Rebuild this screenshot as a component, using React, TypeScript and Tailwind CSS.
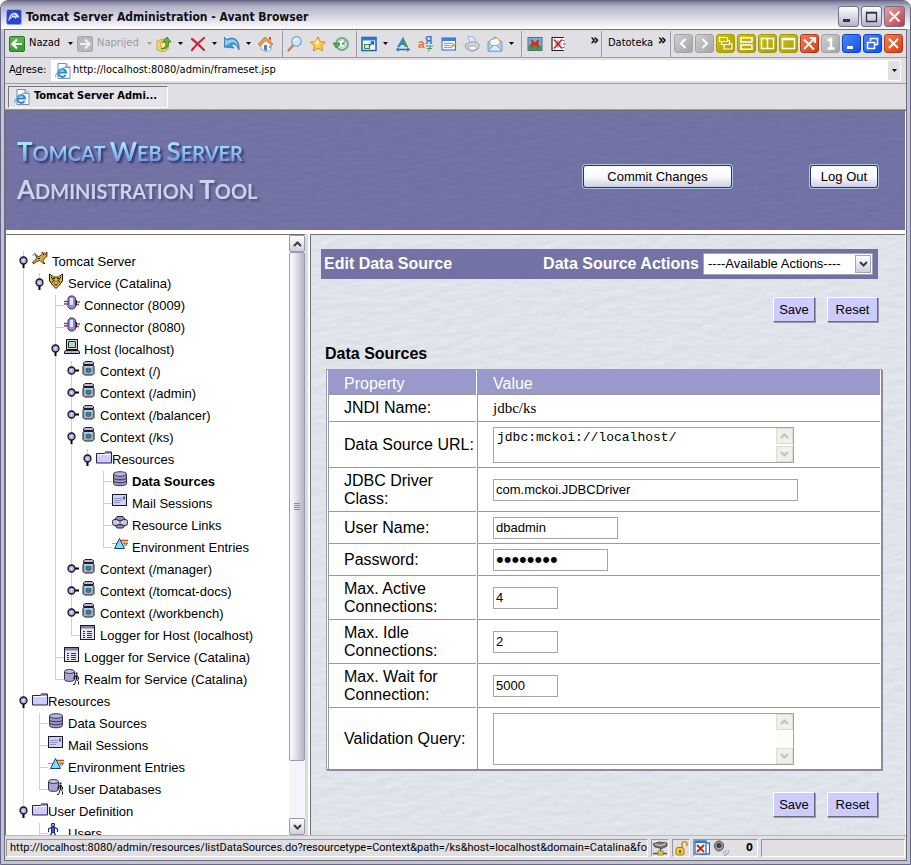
import type { ReactNode } from "react";

const TAHOMA = "font-['DejaVu_Sans_Condensed','DejaVu_Sans',sans-serif]";

/* ---------- small drawings ---------- */

function Icon({ children, size = 16 }: { children: ReactNode; size?: number }) {
  return (
    <svg width={size} height={size} viewBox="0 0 16 16" className="block shrink-0" aria-hidden="true">
      {children}
    </svg>
  );
}

function Caret({ color = "#000" }: { color?: string }) {
  return (
    <svg width="5" height="3" viewBox="0 0 5 3" className="block shrink-0" aria-hidden="true">
      <path d="M0 0h5L2.5 3z" fill={color} />
    </svg>
  );
}

const BackIcon = () => (
  <Icon>
    <rect x=".5" y=".5" width="15" height="15" rx="1.5" fill="#3f9e3a" stroke="#2b7a2b" />
    <path d="M1 1h14v6L1 12z" fill="#74bd62" opacity=".5" />
    <path d="M13 8H4M8 3.5L3.5 8 8 12.500" fill="none" stroke="#fff" strokeWidth="2.200" />
  </Icon>
);
const ForwardIcon = () => (
  <Icon>
    <rect x=".5" y=".5" width="15" height="15" rx="1.500" fill="#b9b9b9" stroke="#a9a9a9" />
    <path d="M3 8h9M8 3.500L12.500 8 8 12.500" fill="none" stroke="#f1f1f1" strokeWidth="2.200" />
  </Icon>
);
const OpenIcon = () => (
  <Icon>
    <path d="M1 5l6-2 5 1v9l-5 3-6-2z" fill="#f3d36c" stroke="#c29a2e" strokeWidth=".8" />
    <path d="M4 7l8-2v8l-5 3z" fill="#fbe79a" stroke="#c29a2e" strokeWidth=".8" />
    <path d="M5 12.500c5 0 5-3 4.500-6.500H6.500L11 1l4 5h-2.500c.5 5-2 8-7.500 6.500z" fill="#5fb83a" stroke="#2f7d1c" strokeWidth=".8" />
  </Icon>
);
const StopIcon = () => (
  <Icon>
    <path d="M2 3c4 3 8 7 12 11M14 2C9 6 5 10 2 14" stroke="#c8283c" strokeWidth="2.200" strokeLinecap="round" fill="none" />
  </Icon>
);
const UndoIcon = () => (
  <Icon>
    <path d="M0 11V1l3 2.500C9 0 16 3 15 14c-2-5-5-7-8-5l3 3z" fill="#4f9bd2" stroke="#2f6fa6" strokeWidth=".8" />
    <path d="M1 3l2 2c5-3 10-1 11 5-3-5-7-5-10-2L1.500 10z" fill="#b7dcf2" opacity=".8" />
  </Icon>
);
const HomeIcon = () => (
  <Icon>
    <path d="M3 8l5-5 5 5v6l-4 2-6-3z" fill="#f1f4fa" stroke="#8a96ae" strokeWidth=".8" />
    <path d="M0 8l7-7 8 7-1.500 1.500L8 4.500 2 10z" fill="#f29a4e" stroke="#bf6520" strokeWidth=".7" />
    <path d="M11 1h2v4l-2-2z" fill="#c9502a" />
    <path d="M6 9h3v6l-3-1z" fill="#4b84cc" />
    <path d="M11 10h2v2h-2z" fill="#6fa3dd" />
  </Icon>
);
const SearchIcon = () => (
  <Icon>
    <circle cx="9.500" cy="5.500" r="4.800" fill="#cfe6f7" stroke="#7fa3c6" strokeWidth="1.300" />
    <path d="M7 4.500c1-2 3-2 4-1.500" stroke="#fff" strokeWidth="1.200" fill="none" />
    <path d="M6 9.500L1.500 14.500" stroke="#c07f4a" strokeWidth="2.200" strokeLinecap="round" />
  </Icon>
);
const StarIcon = () => (
  <Icon>
    <path d="M8 .8l2.200 4.900 5.300.5-4 3.500 1.300 5.300L8 12.200 3.200 15l1.300-5.300-4-3.500 5.300-.5z" fill="#fbd14b" stroke="#d58a1e" />
    <path d="M8 3l1.300 3.500L8 9 4 7z" fill="#fff0a8" />
  </Icon>
);
const HistoryIcon = () => (
  <Icon>
    <circle cx="9" cy="8" r="6" fill="#dfeeed" stroke="#6fae7c" strokeWidth="1.800" />
    <circle cx="9.500" cy="7.500" r="3.800" fill="#f2f9fb" stroke="#8fb5b2" strokeWidth=".7" />
    <path d="M9 8l3.500-3M9 8h3" stroke="#3c6f67" strokeWidth="1" />
    <path d="M0 7h6.500v2L3 12z" fill="#4db04a" stroke="#27752b" strokeWidth=".6" />
  </Icon>
);
const WindowIcon = () => (
  <Icon>
    <rect x="1" y="1.500" width="14" height="13" fill="#fff" stroke="#1d5fb8" strokeWidth="1.500" />
    <path d="M1 1.500h14v3H1z" fill="#2a78d8" />
    <path d="M3.500 8.500h5v4h-5z" fill="#d7ecd2" stroke="#3d8c3a" strokeWidth="1.200" />
    <path d="M8.500 9.500l4-3.500M9.500 6h3v3" stroke="#1d5fb8" strokeWidth="1.300" fill="none" />
  </Icon>
);
const FontIcon = () => (
  <Icon>
    <path d="M8 1l5 10h-3L9 9H6l-1 2H2z" fill="#3c83d0" />
    <path d="M8 1l5 10h-3L7 4.500z" fill="#36a05a" />
    <path d="M2 13.500h12" stroke="#2c65ac" strokeWidth="1.300" />
    <path d="M4 11l-3.500 2.500L4 16zM12 11l3.500 2.500L12 16z" fill="#3c83d0" />
  </Icon>
);
const TranslateIcon = () => (
  <Icon>
    <text x="0" y="12" fontSize="12" fontWeight="700" fill="#f0703c" fontFamily="Liberation Sans">a</text>
    <text x="7" y="8" fontSize="10" fontWeight="700" fill="#2f77d0" fontFamily="Liberation Sans">Я</text>
    <path d="M8 10h7M9 12.500h5M12.500 10l-2 5.500" stroke="#3f9e52" fill="none" />
  </Icon>
);
const FormIcon = () => (
  <Icon>
    <rect x="1" y="2" width="13.500" height="12" fill="#f4f8fd" stroke="#2a6dc2" />
    <path d="M1 2h13.500v3H1z" fill="#3c82dc" />
    <path d="M3 7.500h9M3 9.500h6M3 11.500h7" stroke="#7ba5d8" />
    <path d="M15 7.500l-5 3.500" stroke="#e0913b" strokeWidth="2" />
  </Icon>
);
const PrinterIcon = () => (
  <Icon>
    <path d="M4 0l6 1 2 6H6z" fill="#dceafb" stroke="#8aa7cf" strokeWidth=".8" />
    <path d="M1 9l5-3h6l3.500 3-1.500 4-6 2.500-6-3z" fill="#d3d4d8" stroke="#8d8f96" strokeWidth=".8" />
    <path d="M4 10.500l7-.5 2 3-6 1.500z" fill="#f8f8f8" stroke="#8d8f96" strokeWidth=".6" />
  </Icon>
);
const MailIcon = () => (
  <Icon>
    <path d="M1 6l7-5 7 5v9H1z" fill="#a8cdf0" stroke="#5a8fc6" strokeWidth=".8" />
    <path d="M3 4l8-2 2 5-5 4-5-3z" fill="#fff" stroke="#d99b52" strokeWidth=".8" />
    <path d="M1 15l6-6 1 1 1-1 6 6z" fill="#dceefb" stroke="#5a8fc6" strokeWidth=".7" />
  </Icon>
);
const PictureOffIcon = () => (
  <Icon>
    <rect x="1" y="1.500" width="14" height="13" fill="#6fb3ea" stroke="#5c6b7d" />
    <path d="M1.500 9l4-2 9 3v4h-13z" fill="#3f9a44" />
    <path d="M4 4l8 7M12 4l-8 7M4 7.500h8" stroke="#d92b22" strokeWidth="2" />
  </Icon>
);
const FlashOffIcon = () => (
  <Icon>
    <path d="M14 1.500H2v13h12" fill="#fff" stroke="#222" strokeWidth="1.200" />
    <path d="M12.500 4l2 1M13 8h2.500M12.500 12l2-1" stroke="#555" />
    <path d="M4 3.500l8 9M12 3.500l-8 9" stroke="#c92a2a" strokeWidth="1.800" />
    <path d="M8 4v8M4.500 8h7" stroke="#8d2020" strokeWidth=".6" />
  </Icon>
);
const PageIcon = () => (
  <Icon>
    <path d="M3 .5h8l4 4v11H3z" fill="#fff" stroke="#6c7f9c" strokeWidth=".9" />
    <path d="M11 .5v4h4" fill="#dce6f4" stroke="#6c7f9c" strokeWidth=".9" />
    <path d="M11 9.500H3.500a3.800 3.800 0 0 1 7.500 0zM10.500 12A3.800 3.800 0 0 1 3.500 9.500" fill="none" stroke="#2a86d8" strokeWidth="2" />
    <path d="M1 14c-2-3 8-11 12-10" fill="none" stroke="#5cb2ee" strokeWidth="1.100" />
  </Icon>
);
const AppIcon = () => (
  <Icon>
    <rect x=".5" y=".5" width="15" height="15" rx="2" fill="#2b45c8" stroke="#8fa2ee" />
    <path d="M2.500 12.500C3 2 12 1 13.500 9.500 12 7.500 10.500 8 9.500 10 8.500 7 5 8 2.500 12.500z" fill="#e8eeff" />
    <path d="M5 8.500c1-3 4-3.500 5-1" stroke="#2b45c8" fill="none" />
  </Icon>
);

/* ---------- tree drawings ---------- */

const CatIcon = () => (
  <Icon>
    <path d="M1 4.500c1-2.500 3-2 4 0" fill="none" stroke="#33260c" />
    <path d="M3 4.500l4 1 3-2V1l1.500 1h2L15 1v4.500l-2.500 2-1.500 2.500 2 2.500h-2l-3-3-3 1-3.500 2.500L.500 11l3-2 1.500-3z" fill="#d6a83c" stroke="#33260c" strokeWidth=".8" />
    <path d="M11 3h1v1h-1zM13.500 3h1v1h-1zM6 7h2v1H6z" fill="#111" />
  </Icon>
);
const CatFaceIcon = () => (
  <Icon>
    <path d="M1.500 1l4 3h5l4-3v7l-3 4-3.500 3.500L4.500 12l-3-4z" fill="#e0b440" stroke="#2b1f08" />
    <path d="M3 4l3 4M13 4l-3 4M3.500 9h2M10.500 9h2M5 5.500h2M9 5.500h2" stroke="#2b1f08" />
    <path d="M6.500 7.500L8 9l1.500-1.500v4L8 13l-1.500-1.500z" fill="#fff0bd" stroke="#7b4a12" strokeWidth=".7" />
    <path d="M7 10.500h2v1.500H7z" fill="#7b2a12" />
  </Icon>
);
const ConnectorIcon = () => (
  <Icon>
    <path d="M0 6.500h4M0 9h4" stroke="#a0308e" strokeWidth="1.300" />
    <path d="M12 7h4M12 9.500h3" stroke="#b0492c" strokeWidth="1.300" />
    <path d="M6 1h3.500l2 2v9l-2 2H6l-2-2V3z" fill="#8e89c8" stroke="#3d3976" />
    <path d="M6 3h3v7H6z" fill="#e6e5f8" />
    <path d="M12.500 5v5.500" stroke="#222" />
  </Icon>
);
const HostIcon = () => (
  <Icon>
    <path d="M2.500.5h11v10h-11z" fill="#d4d4e2" stroke="#111" />
    <path d="M4.500 2.500h7v6h-7z" fill="#b3d6c6" stroke="#333" />
    <path d="M.5 14.500v-1.500l1-1.500h13l1 1.500v1.500z" fill="#c3c0dd" stroke="#111" />
    <path d="M3 13h9" stroke="#777" strokeDasharray="1 1" />
  </Icon>
);
const ContextIcon = () => (
  <Icon>
    <path d="M3.500 2l1.500-1.500h7L13.500 2v1.500h-10z" fill="#b9b9d0" stroke="#1c1c33" />
    <path d="M3.500 4.500h10l.5 1v7l-1.500 1.500h-8L3 12.500v-7z" fill="#a9aabf" stroke="#1c1c33" />
    <circle cx="8.500" cy="9" r="2.500" fill="#2c8595" stroke="#155" strokeWidth=".6" />
    <path d="M5 6h7" stroke="#e4e4f0" />
  </Icon>
);
const FolderIcon = () => (
  <Icon>
    <path d="M.5 4.500h8l1-1.500h6v11H.5z" fill="#ccccff" stroke="#222244" />
    <path d="M9 2.500h6v2H9z" fill="#666699" />
    <path d="M1.500 5.500h13" stroke="#fff" />
  </Icon>
);
const DatabaseIcon = () => (
  <Icon>
    <path d="M1.500 3.500v9c0 3 13 3 13 0v-9" fill="#9a99c4" stroke="#333355" />
    <ellipse cx="8" cy="3" rx="6.500" ry="2.300" fill="#b8b8da" stroke="#333355" />
    <path d="M1.500 6.500c0 3 13 3 13 0M1.500 9.500c0 3 13 3 13 0" fill="none" stroke="#333355" />
  </Icon>
);
const SessionIcon = () => (
  <Icon>
    <rect x=".5" y="1.500" width="14" height="11" fill="#ccd2f4" stroke="#16162c" />
    <path d="M2.500 5.500h7M2.500 7.500h7M2.500 9.500h6" stroke="#555a88" strokeDasharray="1 1" />
    <path d="M11 3.500h2v3h-2z" fill="#4a58b8" />
  </Icon>
);
const LinkIcon = () => (
  <Icon>
    <path d="M3 4l2-2.500h6L13 4v2H3z" fill="#8f8dbd" stroke="#24243c" />
    <path d="M3 10h10l-2 3H5z" fill="#9b99c6" stroke="#24243c" />
    <rect x=".5" y="4.500" width="6" height="6" rx="2" fill="#c2c1e2" stroke="#24243c" />
    <rect x="9.500" y="4.500" width="6" height="6" rx="2" fill="#c2c1e2" stroke="#24243c" />
    <path d="M5 7.500h6" stroke="#fff" strokeWidth="2" />
    <path d="M8 5v5" stroke="#24243c" />
  </Icon>
);
const PrismIcon = () => (
  <Icon>
    <path d="M0 6.500h5" stroke="#5fb4d8" />
    <path d="M9 3.500h7" stroke="#e03c2c" strokeWidth="1.500" />
    <path d="M10 5h6" stroke="#f2c328" strokeWidth="1.500" />
    <path d="M11 6.500h5" stroke="#45a845" strokeWidth="1.500" />
    <path d="M12 8h3" stroke="#5650c8" />
    <path d="M7.500 1.500l5 10h-10z" fill="#7fdcf0" stroke="#123c8c" />
  </Icon>
);
const LoggerIcon = () => (
  <Icon>
    <rect x=".5" y=".5" width="14" height="14" fill="#e6e6f2" stroke="#1a1a2c" />
    <path d="M1 1h13v2.500H1z" fill="#7f7fa8" />
    <path d="M3 6.500h2M3 8.500h2M3 10.500h2M3 12.500h2M7 6.500h5M7 8.500h5M7 10.500h5M7 12.500h5" stroke="#333350" />
  </Icon>
);
const RealmIcon = () => (
  <Icon>
    <path d="M.5 2.500v8c0 2.500 10 2.500 10 0v-8" fill="#a7a5d2" stroke="#333355" />
    <ellipse cx="5.500" cy="2.500" rx="5" ry="2" fill="#c4c3e4" stroke="#333355" />
    <path d="M11.500 3.500h2v2h-2z" fill="#16161f" />
    <path d="M12.500 6v4.500M12.500 10l-2 5.500H9M12.500 10l2 2.500v3M12.500 6.500L10 8v2.500M12.500 6.500l2 1.500v2.500" stroke="#16161f" fill="none" />
    <path d="M11.500 6h2v4h-2z" fill="#16161f" />
  </Icon>
);
const UserIcon = () => (
  <Icon>
    <path d="M3.500.5h3v3h-3z" fill="#8fa6ee" stroke="#1b2f7a" />
    <path d="M3.500 4.500h3v5h-3z" fill="#3d5fc4" stroke="#1b2f7a" />
    <path d="M3 4.500L.5 6v3M7 4.500L9.500 6v3M4 9.500L2.500 12v3H1M6 9.500L7.500 12v3H9" stroke="#1b2f7a" fill="none" strokeWidth="1.300" />
  </Icon>
);

/* ---------- tree ---------- */

type Handle = "open" | "closed" | "branch" | "last";
type Node = {
  label: string;
  icon: () => ReactNode;
  /* one character per guide column: "|" draws a line, "." leaves it blank */
  guides: string;
  handle: Handle;
  ends?: boolean;
  tight?: boolean;
  current?: boolean;
};

const NODES: Node[] = [
  { label: "Tomcat Server", icon: CatIcon, guides: "", handle: "open" },
  { label: "Service (Catalina)", icon: CatFaceIcon, guides: "|", handle: "open", ends: true },
  { label: "Connector (8009)", icon: ConnectorIcon, guides: "|.", handle: "branch" },
  { label: "Connector (8080)", icon: ConnectorIcon, guides: "|.", handle: "branch" },
  { label: "Host (localhost)", icon: HostIcon, guides: "|.", handle: "open" },
  { label: "Context (/)", icon: ContextIcon, guides: "|.|", handle: "closed" },
  { label: "Context (/admin)", icon: ContextIcon, guides: "|.|", handle: "closed" },
  { label: "Context (/balancer)", icon: ContextIcon, guides: "|.|", handle: "closed" },
  { label: "Context (/ks)", icon: ContextIcon, guides: "|.|", handle: "open" },
  { label: "Resources", icon: FolderIcon, guides: "|.||", handle: "open", ends: true, tight: true },
  { label: "Data Sources", icon: DatabaseIcon, guides: "|.||.", handle: "branch", current: true },
  { label: "Mail Sessions", icon: SessionIcon, guides: "|.||.", handle: "branch" },
  { label: "Resource Links", icon: LinkIcon, guides: "|.||.", handle: "branch" },
  { label: "Environment Entries", icon: PrismIcon, guides: "|.||.", handle: "last" },
  { label: "Context (/manager)", icon: ContextIcon, guides: "|.|", handle: "closed" },
  { label: "Context (/tomcat-docs)", icon: ContextIcon, guides: "|.|", handle: "closed" },
  { label: "Context (/workbench)", icon: ContextIcon, guides: "|.|", handle: "closed" },
  { label: "Logger for Host (localhost)", icon: LoggerIcon, guides: "|.|", handle: "last" },
  { label: "Logger for Service (Catalina)", icon: LoggerIcon, guides: "|.", handle: "branch" },
  { label: "Realm for Service (Catalina)", icon: RealmIcon, guides: "|.", handle: "last" },
  { label: "Resources", icon: FolderIcon, guides: "", handle: "open", tight: true },
  { label: "Data Sources", icon: DatabaseIcon, guides: "|", handle: "branch" },
  { label: "Mail Sessions", icon: SessionIcon, guides: "|", handle: "branch" },
  { label: "Environment Entries", icon: PrismIcon, guides: "|", handle: "branch" },
  { label: "User Databases", icon: RealmIcon, guides: "|", handle: "last" },
  { label: "User Definition", icon: FolderIcon, guides: "", handle: "open", ends: true, tight: true },
  { label: "Users", icon: UserIcon, guides: ".", handle: "branch" },
];

function TreeHandle({ kind, ends }: { kind: Handle; ends?: boolean }) {
  const full = !(ends || kind === "last");
  return (
    <svg width="17" height="22" viewBox="0 0 17 22" className="-mr-px block shrink-0" aria-hidden="true">
      <path d={full ? "M8.500 0v22" : "M8.500 0v11"} stroke="#ccccee" />
      {(kind === "branch" || kind === "last") && <path d="M8 10.500h9" stroke="#ccccee" />}
      {kind === "open" && <path d="M8.500 11v6" stroke="#000" strokeWidth="2" />}
      {kind === "closed" && <path d="M9 9.500h7" stroke="#000" strokeWidth="2" />}
      {(kind === "open" || kind === "closed") && (
        <>
          <circle cx="8.500" cy="9.500" r="3.500" fill="#a9a9d6" stroke="#111128" strokeWidth="1.300" />
          <circle cx="8.500" cy="9.500" r="1" fill="#fff" />
        </>
      )}
    </svg>
  );
}

function TreeRow({ node }: { node: Node }) {
  const Glyph = node.icon;
  return (
    <li className="flex h-[22px]">
      {node.guides.split("").map((g, i) => (
        <span key={i} className="flex w-4 shrink-0 pl-2">
          {g === "|" && <span className="w-px bg-[#ccccee]" />}
        </span>
      ))}
      <TreeHandle kind={node.handle} ends={node.ends} />
      <a href="#" className="flex pl-px">
        <Glyph />
        <span className={`whitespace-nowrap leading-[22px] ${node.tight ? "" : "pl-1"} ${node.current ? "font-bold" : ""}`}>
          {node.label}
        </span>
      </a>
    </li>
  );
}

/* ---------- shared bits ---------- */

function Chevron({ up, color = "#3a3a48" }: { up?: boolean; color?: string }) {
  return (
    <svg width="9" height="6" viewBox="0 0 9 6" className="block" aria-hidden="true">
      <path d={up ? "M1 5l3.500-3.500L8 5" : "M1 1l3.500 3.500L8 1"} fill="none" stroke={color} strokeWidth="2" />
    </svg>
  );
}

function Paper({ id, light }: { id: string; light: string }) {
  return (
    <svg className="absolute inset-0 h-full w-full" aria-hidden="true">
      <filter id={id} x="0" y="0" width="100%" height="100%" colorInterpolationFilters="sRGB">
        <feTurbulence type="fractalNoise" baseFrequency="0.06 0.14" numOctaves="2" seed="4" result="n" />
        <feDiffuseLighting in="n" lightingColor={light} surfaceScale="0.2" diffuseConstant="1.13">
          <feDistantLight azimuth="240" elevation="62" />
        </feDiffuseLighting>
      </filter>
      <rect width="100%" height="100%" filter={`url(#${id})`} />
    </svg>
  );
}

const Divider = () => <span className="h-[26px] w-px shrink-0 bg-[#9d9da8]" />;

function Tool({ label, children, menu, wide }: { label: string; children: ReactNode; menu?: boolean; wide?: boolean }) {
  return (
    <button type="button" aria-label={label} className={`flex shrink-0 items-center ${menu ? "w-[34px] gap-[6px]" : wide ? "w-6" : "w-[23px]"}`}>
      {children}
      {menu && <Caret />}
    </button>
  );
}

function Tile({ label, tone, children }: { label: string; tone: string; children: ReactNode }) {
  return (
    <button type="button" aria-label={label} className={`flex h-[19px] w-[19px] shrink-0 items-center justify-center rounded-[3px] border ${tone}`}>
      <svg width="15" height="15" viewBox="0 0 15 15" fill="none" stroke="#fff" strokeWidth="1.500" aria-hidden="true">
        {children}
      </svg>
    </button>
  );
}

const GREY = "border-[#a2a2a2] bg-linear-to-br from-[#cfcfcf] to-[#a5a5a5]";
const OLIVE = "border-[#a89a00] bg-linear-to-br from-[#d0c410] to-[#a89c00]";
const RED = "border-[#b33a18] bg-linear-to-br from-[#f08058] to-[#d03c10]";
const BLUE = "border-[#0c44c0] bg-linear-to-br from-[#4a86f8] to-[#0a50e8]";

function TitleBar() {
  const btn = "flex h-[21px] w-[21px] items-end justify-center rounded-[3px] border border-[#70708c]";
  return (
    <header className="flex h-7 shrink-0 items-center rounded-t-md bg-linear-to-b from-[#77778f] via-[#b4b4c8] via-20% to-white pt-[3px] pr-[5px] pl-[5px]">
      <AppIcon />
      <h1 className="flex-1 pl-1 text-[12px] font-bold text-[#101018]">Tomcat Server Administration - Avant Browser</h1>
      <div className="flex gap-[2px]">
        <button type="button" aria-label="Minimize" className={`${btn} bg-linear-to-b from-white to-[#b4b4c8]`}>
          <svg width="19" height="19"><path d="M4 13.500h7" stroke="#33334c" strokeWidth="3" /></svg>
        </button>
        <button type="button" aria-label="Maximize" className={`${btn} bg-linear-to-b from-white to-[#b4b4c8]`}>
          <svg width="19" height="19"><path d="M4.500 5.500h10v9h-10zM4 6h11" stroke="#33334c" strokeWidth="1.300" fill="none" /></svg>
        </button>
        <button type="button" aria-label="Close" className={`${btn} bg-linear-to-br from-[#e8a0a0] to-[#c03844]`}>
          <svg width="19" height="19"><path d="M4.500 4.500l10 10M14.500 4.500l-10 10" stroke="#fff" strokeWidth="2" /></svg>
        </button>
      </div>
    </header>
  );
}

function Toolbar() {
  return (
    <div className="flex h-7 shrink-0 items-center border-b border-[#9d9da8] pl-1 text-[11px]">
      <button type="button" className="flex w-[68px] shrink-0 items-center">
        <BackIcon />
        <span className="flex-1 pl-1 text-left">Nazad</span>
        <span className="pr-1"><Caret /></span>
      </button>
      <button type="button" className="flex w-[79px] shrink-0 items-center text-[#9a9aa2]">
        <ForwardIcon />
        <span className="flex-1 pl-1 text-left">Naprijed</span>
        <span className="pr-1"><Caret color="#9a9aa2" /></span>
      </button>
      <Tool label="Open" menu><OpenIcon /></Tool>
      <Tool label="Stop" menu><StopIcon /></Tool>
      <Tool label="Undo" menu><UndoIcon /></Tool>
      <Tool label="Home" wide><HomeIcon /></Tool>
      <Divider />
      <div className="flex shrink-0 pl-1">
        <Tool label="Search"><SearchIcon /></Tool>
        <Tool label="Favorites"><StarIcon /></Tool>
        <Tool label="History"><HistoryIcon /></Tool>
      </div>
      <Divider />
      <div className="flex shrink-0 pl-1">
        <Tool label="New window" menu><WindowIcon /></Tool>
        <Tool label="Fonts"><FontIcon /></Tool>
        <Tool label="Translate"><TranslateIcon /></Tool>
        <Tool label="Forms"><FormIcon /></Tool>
        <Tool label="Print"><PrinterIcon /></Tool>
        <Tool label="Mail" menu><MailIcon /></Tool>
      </div>
      <Divider />
      <div className="flex flex-1 pl-[5px]">
        <Tool label="Block pictures"><PictureOffIcon /></Tool>
        <Tool label="Block Flash"><FlashOffIcon /></Tool>
        <button type="button" aria-label="More tools" className="ml-auto pr-[2px] pb-2 text-[15px] leading-3 font-bold">»</button>
      </div>
      <Divider />
      <button type="button" className="w-[52px] shrink-0 pl-[6px] text-left">Datoteka</button>
      <button type="button" aria-label="More menus" className="w-4 shrink-0 pb-2 text-[15px] leading-3 font-bold">»</button>
      <Divider />
      <div className="flex shrink-0 gap-[2px] pr-[3px] pl-[3px]">
        <Tile label="Previous" tone={GREY}><path d="M9.500 3L5 7.500 9.500 12" strokeWidth="2" /></Tile>
        <Tile label="Next" tone={GREY}><path d="M5.500 3L10 7.500 5.500 12" strokeWidth="2" /></Tile>
        <Tile label="Cascade" tone={OLIVE}><path d="M1.500 1.500h8v4h-8zM3.500 5.500v3h8v-4h-2M6 8.500v4.500h8V7.500h-2" strokeWidth="1.200" /></Tile>
        <Tile label="Tile horizontally" tone={OLIVE}><path d="M2 1.800h11v4.200H2zM2 9h11v4.200H2z" /></Tile>
        <Tile label="Tile vertically" tone={OLIVE}><path d="M1.500 2.500h12v10h-12zM7.500 2.500v10" /></Tile>
        <Tile label="Maximize all" tone={OLIVE}><path d="M1.500 2.500h12v10h-12zM1.500 3.500h12" /></Tile>
        <Tile label="Close all" tone={RED}><path d="M2 3.500l10 10M2 13L13 2M8 2h5v5" strokeWidth="1.800" /></Tile>
        <Tile label="Window count 1" tone={GREY}><path d="M4.500 4.500L8 3v9.500M4.500 12.500h7" strokeWidth="2.500" /></Tile>
        <Tile label="Minimize page" tone={BLUE}><path d="M3 11.500h6" strokeWidth="3" /></Tile>
        <Tile label="Restore page" tone={BLUE}><path d="M5.500 5V2.500h7v6H10M2.500 6.500h7v6h-7z" /></Tile>
        <Tile label="Close page" tone={RED}><path d="M3 3l9 9M12 3l-9 9" strokeWidth="2" /></Tile>
      </div>
    </div>
  );
}

function AddressBar() {
  return (
    <div className="flex h-[26px] shrink-0 items-center border-b border-[#9d9da8] pr-[5px] pl-1 text-[11px]">
      <label htmlFor="address" className="w-[42px] shrink-0">
        A<span className="underline">d</span>rese:
      </label>
      <div className="flex h-[21px] flex-1 items-center bg-white pl-1">
        <PageIcon />
        <input id="address" defaultValue="http://localhost:8080/admin/frameset.jsp" className="min-w-0 flex-1 pl-[2px] outline-none" />
        <button type="button" aria-label="Show addresses" className="mr-px flex h-[19px] w-3 items-center justify-center bg-[#e0dfe3]">
          <Caret />
        </button>
      </div>
    </div>
  );
}

function TabBar() {
  return (
    <div className="flex h-[26px] shrink-0 items-center border-b border-[#9d9da8] pl-[3px]">
      <button type="button" className="flex h-[22px] w-[160px] items-center gap-1 border border-t-[#77777f] border-r-white border-b-white border-l-[#77777f] bg-[#e4e3e8] pl-[5px] text-[11px] font-bold whitespace-nowrap">
        <PageIcon />
        Tomcat Server Admi...
      </button>
    </div>
  );
}

function BigWord({ children }: { children: string }) {
  return (
    <>
      <span className="text-[26px]">{children[0]}</span>
      {children.slice(1)}
    </>
  );
}

function Banner() {
  const button =
    "h-[23px] rounded-[3px] border border-[#1c3a66] bg-linear-to-b from-white via-[#fafaff] to-[#cfcfe2] text-[13px] leading-none text-black shadow-[0_0_0_1px_#a9c4e6]";
  return (
    <div className="relative h-[119px] shrink-0 bg-[#7272a4]">
      <Paper id="banner-grain" light="#7272a4" />
      <div className="relative flex h-full items-center pr-[27px] pl-[11px]">
        <h2 className="flex-1 font-['Lato','Open_Sans',sans-serif] text-[20px] leading-9 font-bold uppercase">
          <span className="block w-fit bg-linear-to-b from-[#a6e4ff] from-30% to-[#6f8fe0] to-80% bg-clip-text text-transparent drop-shadow-[2px_2px_1px_#2c3468]">
            <BigWord>Tomcat</BigWord> <BigWord>Web</BigWord> <BigWord>Server</BigWord>
          </span>
          <span className="block text-[#cdd3ea] drop-shadow-[2px_2px_1px_#50507c]">
            <BigWord>Administration</BigWord> <BigWord>Tool</BigWord>
          </span>
        </h2>
        <button type="button" className={`${button} mt-3 mr-[78px] w-[149px]`}>Commit Changes</button>
        <button type="button" className={`${button} mt-3 w-[68px]`}>Log Out</button>
      </div>
    </div>
  );
}

function SideTree() {
  return (
    <nav aria-label="Server tree" className="flex w-[299px] shrink-0 border-t border-[#716f74] bg-white">
      <ul className="min-w-0 flex-1 overflow-hidden pt-4 pl-[9px] text-[13px]">
        {NODES.map((n, i) => (
          <TreeRow key={i} node={n} />
        ))}
      </ul>
      <div className="flex w-4 shrink-0 flex-col bg-[#f4f4fa]" aria-hidden="true">
        <span className="flex h-[17px] items-center justify-center rounded-xs border border-[#9a9aae] bg-linear-to-b from-white to-[#cfcfdd]"><Chevron up /></span>
        <span className="flex flex-[510] flex-col items-center justify-center gap-px rounded-xs border border-[#9a9aae] bg-linear-to-r from-[#fdfdff] via-[#dcdce8] to-[#b4b4c8]">
          {[0, 1, 2, 3].map((k) => (
            <span key={k} className="h-px w-[6px] bg-[#8a8a9c]" />
          ))}
        </span>
        <span className="flex-[57]" />
        <span className="flex h-[17px] items-center justify-center rounded-xs border border-[#9a9aae] bg-linear-to-b from-white to-[#cfcfdd]"><Chevron /></span>
      </div>
    </nav>
  );
}

function FormButtons() {
  const cls =
    "h-[25px] border border-t-white border-r-[#6a6a78] border-b-[#6a6a78] border-l-white bg-[#ccccff] text-[13px] leading-none shadow-[1px_1px_0_#9a9aa8]";
  return (
    <div className="flex justify-end gap-3 pr-[27px]">
      <button type="submit" className={`${cls} w-[42px]`}>Save</button>
      <button type="reset" className={`${cls} w-[51px]`}>Reset</button>
    </div>
  );
}

const BOX = "border border-[#a5a5a8] bg-white px-[2px] outline-none";

function ScrollArea({ id, rows, value }: { id: string; rows: "one" | "two"; value: string }) {
  const stub = "flex h-[16px] items-center justify-center border border-[#dedcd2] bg-[#f0efe9]";
  return (
    <div className={`flex w-[301px] ${BOX} pr-0 ${rows === "one" ? "h-9" : "h-[52px]"}`}>
      <textarea
        id={id}
        defaultValue={value}
        className="min-w-0 flex-1 resize-none overflow-hidden pt-px pl-px font-['Liberation_Mono',monospace] text-[13px] leading-[17px] outline-none"
      />
      <span className="flex w-[17px] flex-col justify-between bg-[#fbfbf9]" aria-hidden="true">
        <span className={stub}><Chevron up color="#c4c2b4" /></span>
        <span className={stub}><Chevron color="#c4c2b4" /></span>
      </span>
    </div>
  );
}

function Field({ id, value, width, type = "text" }: { id: string; value: string; width: string; type?: string }) {
  return (
    <input
      id={id}
      type={type}
      defaultValue={value}
      className={`block h-[22px] ${type === "password" ? "text-[22px]" : "text-[13px]"} ${BOX} ${width}`}
    />
  );
}

function Row({ id, label, height, children }: { id: string; label: string; height: string; children: ReactNode }) {
  return (
    <tr className={height}>
      <th scope="row" className="border-t border-l border-[#9a9aa0] pl-[15px] text-left align-middle font-normal leading-[18px]">
        <label htmlFor={id}>{label}</label>
      </th>
      <td className="border-t border-l border-[#9a9aa0] pl-[15px] align-middle">{children}</td>
    </tr>
  );
}

function MainPanel() {
  return (
    <main className="relative min-w-0 flex-1 overflow-hidden border-t border-l border-[#716f74] bg-[#e0e4eb]">
      <Paper id="page-grain" light="#e0e5ec" />
      <form className="relative pt-[14px] pl-[10px]" onSubmit={(e) => e.preventDefault()}>
        <div className="mr-[27px] flex h-[30px] items-center bg-[#7272a4] pr-[5px] pl-[3px] text-[16px] font-bold text-white">
          <h2 className="flex-1">Edit Data Source</h2>
          <label htmlFor="actions" className="pr-1">Data Source Actions</label>
          <div className="relative">
            <select id="actions" className="block h-[22px] w-[170px] appearance-none border border-[#a5a5b8] bg-white pl-1 text-[13px] font-normal text-black outline-none">
              <option>----Available Actions----</option>
            </select>
            <span className="pointer-events-none absolute top-[2px] right-[2px] flex h-[18px] w-4 items-center justify-center border border-[#a5a5b8] bg-linear-to-b from-white to-[#cfcfdd]">
              <Chevron />
            </span>
          </div>
        </div>
        <div className="pt-[18px]"><FormButtons /></div>
        <h3 className="pt-[22px] pl-1 text-[16px] leading-5 font-bold">Data Sources</h3>
        <div className="mt-[5px] mr-[23px] ml-[5px] border border-t-[#9d9dbb] border-r-[#8a8aa6] border-b-[#8a8aa6] border-l-[#9d9dbb] bg-white shadow-[1px_1px_0_#8a8aa6]">
          <table className="w-full table-fixed border-separate border-spacing-x-px text-[16px]">
            <colgroup>
              <col className="w-[148px]" />
              <col />
            </colgroup>
            <thead>
              <tr className="h-6 text-left leading-5 text-white">
                <th scope="col" className="bg-[#9999cc] pt-[3px] pl-4 font-normal">Property</th>
                <th scope="col" className="bg-[#9999cc] pt-[3px] pl-4 font-normal">Value</th>
              </tr>
            </thead>
            <tbody>
              <Row id="jndi" label="JNDI Name:" height="h-[27px]">
                <output id="jndi" className="block font-['Liberation_Serif',serif] text-[15px] leading-5">jdbc/ks</output>
              </Row>
              <Row id="url" label="Data Source URL:" height="h-[46px]">
                <ScrollArea id="url" rows="one" value="jdbc:mckoi://localhost/" />
              </Row>
              <Row id="driver" label="JDBC Driver Class:" height="h-11">
                <Field id="driver" value="com.mckoi.JDBCDriver" width="w-[305px]" />
              </Row>
              <Row id="user" label="User Name:" height="h-8">
                <Field id="user" value="dbadmin" width="w-[125px]" />
              </Row>
              <Row id="password" label="Password:" height="h-8">
                <Field id="password" type="password" value="dbsecret" width="w-[115px]" />
              </Row>
              <Row id="active" label="Max. Active Connections:" height="h-11">
                <Field id="active" value="4" width="w-[65px]" />
              </Row>
              <Row id="idle" label="Max. Idle Connections:" height="h-11">
                <Field id="idle" value="2" width="w-[65px]" />
              </Row>
              <Row id="wait" label="Max. Wait for Connection:" height="h-11">
                <Field id="wait" value="5000" width="w-[65px]" />
              </Row>
              <Row id="query" label="Validation Query:" height="h-[62px]">
                <ScrollArea id="query" rows="two" value="" />
              </Row>
            </tbody>
          </table>
        </div>
        <div className="pt-[22px]"><FormButtons /></div>
      </form>
    </main>
  );
}

function StatusBar() {
  const cell = "flex h-[18px] shrink-0 items-center border border-t-[#9a9894] border-r-white border-b-white border-l-[#9a9894]";
  return (
    <footer className="flex h-[25px] shrink-0 items-center gap-[3px] border-t border-[#b8b8c4] bg-[#e0dfe3] px-px text-[11px]">
      <div className={`${cell} min-w-0 flex-1 overflow-hidden pl-[3px] font-['Roboto','Open_Sans',sans-serif] whitespace-nowrap`}>
        http://localhost:8080/admin/resources/listDataSources.do?resourcetype=Context&amp;path=/ks&amp;host=localhost&amp;domain=Catalina&amp;fo
      </div>
      <div className={`${cell} w-[18px]`}>
        <Icon>
          <path d="M1 4l6-2 8 1v3l-5 2.500L3 7z" fill="#77787c" stroke="#3c3d40" strokeWidth=".8" />
          <path d="M3 4.500l6 1 5-2" stroke="#d6d7da" fill="none" />
          <path d="M1 13.500h14M8.500 8v4" stroke="#555" strokeWidth="1.300" />
          <rect x="6" y="11" width="5" height="4" fill="#e6cc3c" stroke="#8a7518" strokeWidth=".7" />
        </Icon>
      </div>
      <div className={`${cell} w-[18px]`}>
        <Icon>
          <path d="M9 8V4c0-3 5-3 5 0v2" stroke="#c8981a" strokeWidth="1.700" fill="none" />
          <rect x="3" y="7.500" width="8" height="7.500" rx="2" fill="#f2c93c" stroke="#a87b0c" />
          <path d="M7 10v3" stroke="#5c4300" strokeWidth="1.500" />
        </Icon>
      </div>
      <div className={`${cell} w-[65px] gap-[3px]`}>
        <Icon>
          <rect x="7" y="3" width="8.500" height="11" fill="#fff" stroke="#1c62c4" strokeWidth="1.200" />
          <rect x="1" y="1" width="11" height="13" fill="#fff" stroke="#1c62c4" strokeWidth="1.200" />
          <path d="M1 1h11v2H1z" fill="#2a78d8" />
          <path d="M3 5l7 7M10 5l-7 7" stroke="#d81e1e" strokeWidth="2" />
        </Icon>
        <Icon>
          <ellipse cx="6" cy="6" rx="4.500" ry="5" fill="#9b9da2" stroke="#4b4d52" />
          <circle cx="6" cy="5.500" r="2.500" fill="#3d3f44" />
          <path d="M10 13c2 0 3-1 3-3M11 15.500c3-.5 4.500-2 4.500-5" stroke="#8890b0" fill="none" />
        </Icon>
        <strong className="flex-1 pr-1 text-right">0</strong>
      </div>
      <div className={`${cell} w-[144px]`} />
    </footer>
  );
}

export default function App() {
  return (
    <div className={`flex h-screen flex-col overflow-hidden rounded-t-lg border border-[#66668a] bg-[#c3c3d6] ${TAHOMA} text-black`}>
      <TitleBar />
      <div className="mx-[3px] mb-[3px] flex min-h-0 flex-1 flex-col border border-[#716f74] bg-[#e0dfe3]">
        <Toolbar />
        <AddressBar />
        <TabBar />
        <div className="flex min-h-0 flex-1 flex-col border-t border-l border-[#716f74] bg-white pr-px font-['Liberation_Sans',Arial,sans-serif]">
          <Banner />
          <div className="flex min-h-0 flex-1 pt-1">
            <SideTree />
            <div className="w-[5px] shrink-0 border-r-2 border-white bg-[#dcdce0]" />
            <MainPanel />
          </div>
        </div>
        <StatusBar />
      </div>
    </div>
  );
}
